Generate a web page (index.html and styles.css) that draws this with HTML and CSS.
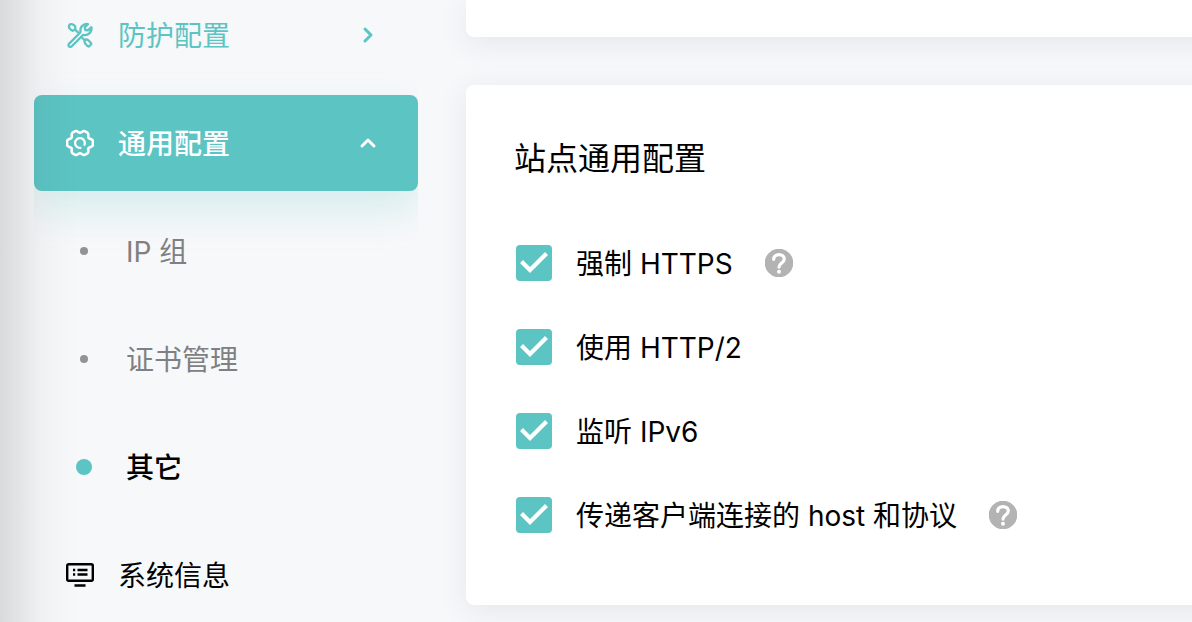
FILE: index.html
```html
<!DOCTYPE html>
<html lang="zh-CN">
<head>
<meta charset="utf-8">
<meta name="viewport" content="width=device-width, initial-scale=1">
<title>通用配置</title>
<link rel="stylesheet" href="styles.css">
</head>
<body>
<svg class="sprite" aria-hidden="true">
  <symbol id="help" viewBox="0 0 28 28">
    <circle cx="14" cy="14" r="14.3" fill="#b3b3b3"/>
    <path d="M8.700 10.300C8.700 7.200 11.200 5.600 14 5.600c3 0 5.300 1.800 5.300 4.500 0 3.700-5.300 4.300-5.300 8" fill="none" stroke="#fff" stroke-width="3.200" stroke-linecap="round"/>
    <circle cx="14" cy="22.800" r="2" fill="#fff"/>
  </symbol>
</svg>
<div class="app">
  <nav class="sidebar">
    <a class="nav-item accent" href="#protect">
      <svg class="nav-icon" viewBox="0 0 28 28" fill="none" stroke="currentColor" stroke-width="2.300" stroke-linejoin="round" stroke-linecap="round">
        <path d="M2.700 23.100 14.500 11.300C13.600 6.500 17 2.300 22 3.100L18.800 6.300 19.300 9 22 9.400 25.400 6.200C26.200 11.200 22 15 17.200 13.900L5.300 25.700C3.200 26.400 1.900 25.200 2.700 23.100Z"/>
        <path d="M3.500 3.900C5 2.400 8 3.500 9.200 5.300L9.300 8.500 6.700 9.800C4.500 9.300 1.700 6 3.500 3.900ZM9.200 8.600 12 11.400M16.500 17.300 19 19.800M19 18.600C21 17.600 24.800 20.600 25.300 23.200L23 25.500C20.500 25 17.400 21.200 19 18.600Z"/>
      </svg>
      <span class="nav-label">防护配置</span>
      <svg class="chevron" viewBox="0 0 20 20"><path d="m7 4 6 6-6 6"/></svg>
    </a>
    <a class="nav-item active" href="#general">
      <svg class="nav-icon" viewBox="0 0 28 28" fill="none" stroke="currentColor" stroke-width="2.600" stroke-linejoin="round" stroke-linecap="round">
        <path d="M9.300 2.100C11 1.200 12.200 3.800 14 3.800S17 1.200 18.700 2.100L21.500 3.700C23.200 4.900 21.600 7.200 22.500 8.800S26.900 9.900 26.900 12V16C26.900 18.100 23.400 17.600 22.500 19.200S23.200 23.100 21.500 24.300L18.700 25.900C17 26.800 15.800 24.200 14 24.200S11 26.800 9.300 25.900L6.500 24.300C4.800 23.100 6.400 20.800 5.500 19.200S1.100 18.100 1.100 16V12C1.100 9.900 4.600 10.400 5.500 8.800S4.800 4.900 6.500 3.700Z"/>
        <path d="M18.500 15.800A4.900 4.900 0 1 0 14.400 18.900" stroke-width="2.300"/>
      </svg>
      <span class="nav-label">通用配置</span>
      <svg class="chevron" viewBox="0 0 20 20"><path d="m4 13 6-6 6 6"/></svg>
    </a>
    <a class="nav-item sub" href="#ip"><span class="bullet"></span><span class="nav-label">IP 组</span></a>
    <a class="nav-item sub" href="#cert"><span class="bullet"></span><span class="nav-label">证书管理</span></a>
    <a class="nav-item sub current" href="#other"><span class="bullet"></span><span class="nav-label">其它</span></a>
    <a class="nav-item" href="#system">
      <svg class="nav-icon" viewBox="0 0 28 28" fill="none" stroke="currentColor" stroke-width="2.400">
        <rect x="1.200" y="3.200" width="25.600" height="16.600" rx="1.500"/>
        <path d="M7 9h2.200M11.500 9h10M7 13.500h2.200M11.500 13.500h10M8.500 24.500h11" stroke-width="2.300"/>
      </svg>
      <span class="nav-label">系统信息</span>
    </a>
  </nav>
  <main class="content">
    <section class="card card-previous"></section>
    <section class="card">
      <h2 class="card-title">站点通用配置</h2>
      <div class="option">
        <input class="check" type="checkbox" id="https" checked>
        <label for="https">强制 HTTPS</label>
        <button class="help" type="button" aria-label="帮助"><svg><use href="#help"/></svg></button>
      </div>
      <div class="option">
        <input class="check" type="checkbox" id="http2" checked>
        <label for="http2">使用 HTTP/2</label>
      </div>
      <div class="option">
        <input class="check" type="checkbox" id="ipv6" checked>
        <label for="ipv6">监听 IPv6</label>
      </div>
      <div class="option">
        <input class="check" type="checkbox" id="host" checked>
        <label for="host">传递客户端连接的 host 和协议</label>
        <button class="help" type="button" aria-label="帮助"><svg><use href="#help"/></svg></button>
      </div>
    </section>
  </main>
</div>
</body>
</html>
```

FILE: styles.css
```css
* {
  box-sizing: border-box;
}

body {
  margin: 0;
  background: #f7f8fa;
  color: #000;
  font-family: Inter, "Noto Sans CJK SC", sans-serif;
  font-size: 28px;
  line-height: 40px;
}

.sprite {
  position: absolute;
  width: 0;
  height: 0;
}

.app {
  position: relative;
  display: flex;
  height: 100vh;
  overflow: hidden;
}

/* shade cast over the left edge of the page */
.app::before {
  content: "";
  position: absolute;
  z-index: 1;
  inset: 0 auto 0 0;
  width: 80px;
  background: linear-gradient(to right, rgba(0, 0, 0, .12), rgba(0, 0, 0, .08) 25%, rgba(0, 0, 0, .03) 50%, rgba(0, 0, 0, .01) 75%, transparent);
  pointer-events: none;
}

.sidebar {
  display: flex;
  flex: none;
  flex-direction: column;
  gap: 12px;
  width: 418px;
  margin-top: -13px;
  padding-left: 34px;
}

.nav-item {
  display: flex;
  flex: none;
  align-items: center;
  height: 96px;
  padding: 0 40px 0 32px;
  border-radius: 8px;
  color: #000;
  text-decoration: none;
}

.nav-icon {
  flex: none;
  width: 28px;
  height: 28px;
  margin-right: 24px;
}

.nav-label {
  flex: 1;
  padding-top: 2px;
}

.chevron {
  width: 20px;
  height: 20px;
  fill: none;
  stroke: currentColor;
  stroke-width: 3;
  stroke-linecap: round;
  stroke-linejoin: round;
}

.accent {
  color: #5cc4c3;
}

.active {
  background: #5cc4c3;
  box-shadow: 0 18px 40px rgba(92, 196, 195, .22);
  clip-path: inset(-80px 0);
  color: #fff;
  font-weight: 500;
}

.sub {
  padding-left: 42px;
  color: #7f8081;
}

.bullet {
  width: 8px;
  height: 8px;
  margin: 0 38px 0 4px;
  border-radius: 50%;
  background: #929394;
}

.current {
  color: #000;
  font-weight: 500;
}

.current .bullet {
  width: 16px;
  height: 16px;
  margin: 0 34px 0 0;
  background: #5cc4c3;
}

/* cards run past the right edge of the viewport */
.content {
  flex: 1;
  margin-right: -48px;
  padding-left: 48px;
}

.card {
  padding: 50px 48px 48px;
  border-radius: 8px;
  background: #fff;
  box-shadow: 0 6px 30px rgba(30, 50, 80, .09);
}

.card-previous {
  height: 37px;
  margin-bottom: 48px;
  padding: 0;
  border-radius: 0 0 8px 8px;
}

.card-title {
  margin: 0 0 38px;
  font-size: 32px;
  font-weight: 400;
  line-height: 48px;
}

.option {
  display: flex;
  align-items: center;
  height: 84px;
  padding-left: 2px;
}

.option label {
  padding-top: 2px;
}

.check {
  flex: none;
  width: 36px;
  height: 36px;
  margin: 0 24px 0 0;
  border-radius: 4px;
  background: #5cc4c3;
  appearance: none;
}

.check:checked::after {
  content: "";
  display: block;
  width: 36px;
  height: 36px;
  background: #fff;
  clip-path: polygon(4px 18px, 7px 15px, 14px 22px, 29px 7px, 32px 10px, 14px 28px);
}

.help {
  width: 28px;
  height: 28px;
  margin-left: 32px;
  padding: 0;
  border: 0;
  background: none;
}

.help svg {
  display: block;
  width: 28px;
  height: 28px;
  overflow: visible;
}
```
